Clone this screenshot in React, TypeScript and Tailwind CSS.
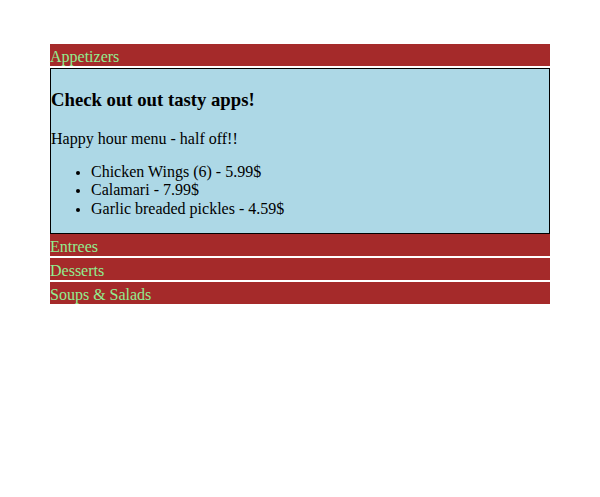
import React from 'react';

const headerCls = "h-[22px] pt-[2px] leading-[22px] bg-[#a52a2a] text-[#90ee90] text-[16px] cursor-pointer";

export default function App() {
    return (
        <div className="min-h-[497px] bg-white pt-[44px] px-[50px] font-['Liberation_Serif','Times_New_Roman',serif] text-[16px] text-black">
            <div className="w-[500px]">
                {/* Open section */}
                <div className={headerCls}>Appetizers</div>
                <div className="mt-[2px] bg-[#add8e6] border border-black leading-[1.15]">
                    <h3 className="text-[18.72px] font-bold mt-[19.5px] mb-[19.5px]">Check out out tasty apps!</h3>
                    <p className="mt-4 mb-[15px]">Happy hour menu - half off!!</p>
                    <ul className="list-disc pl-10 mt-[15px] mb-[15px] marker:text-[14px]">
                        <li>Chicken Wings (6) - 5.99$</li>
                        <li>Calamari - 7.99$</li>
                        <li>Garlic breaded pickles - 4.59$</li>
                    </ul>
                </div>

                {/* Closed sections */}
                <div className={headerCls}>Entrees</div>
                <div className={headerCls + " mt-[2px]"}>Desserts</div>
                <div className={headerCls + " mt-[2px]"}>Soups &amp; Salads</div>
            </div>
        </div>
    );
}
